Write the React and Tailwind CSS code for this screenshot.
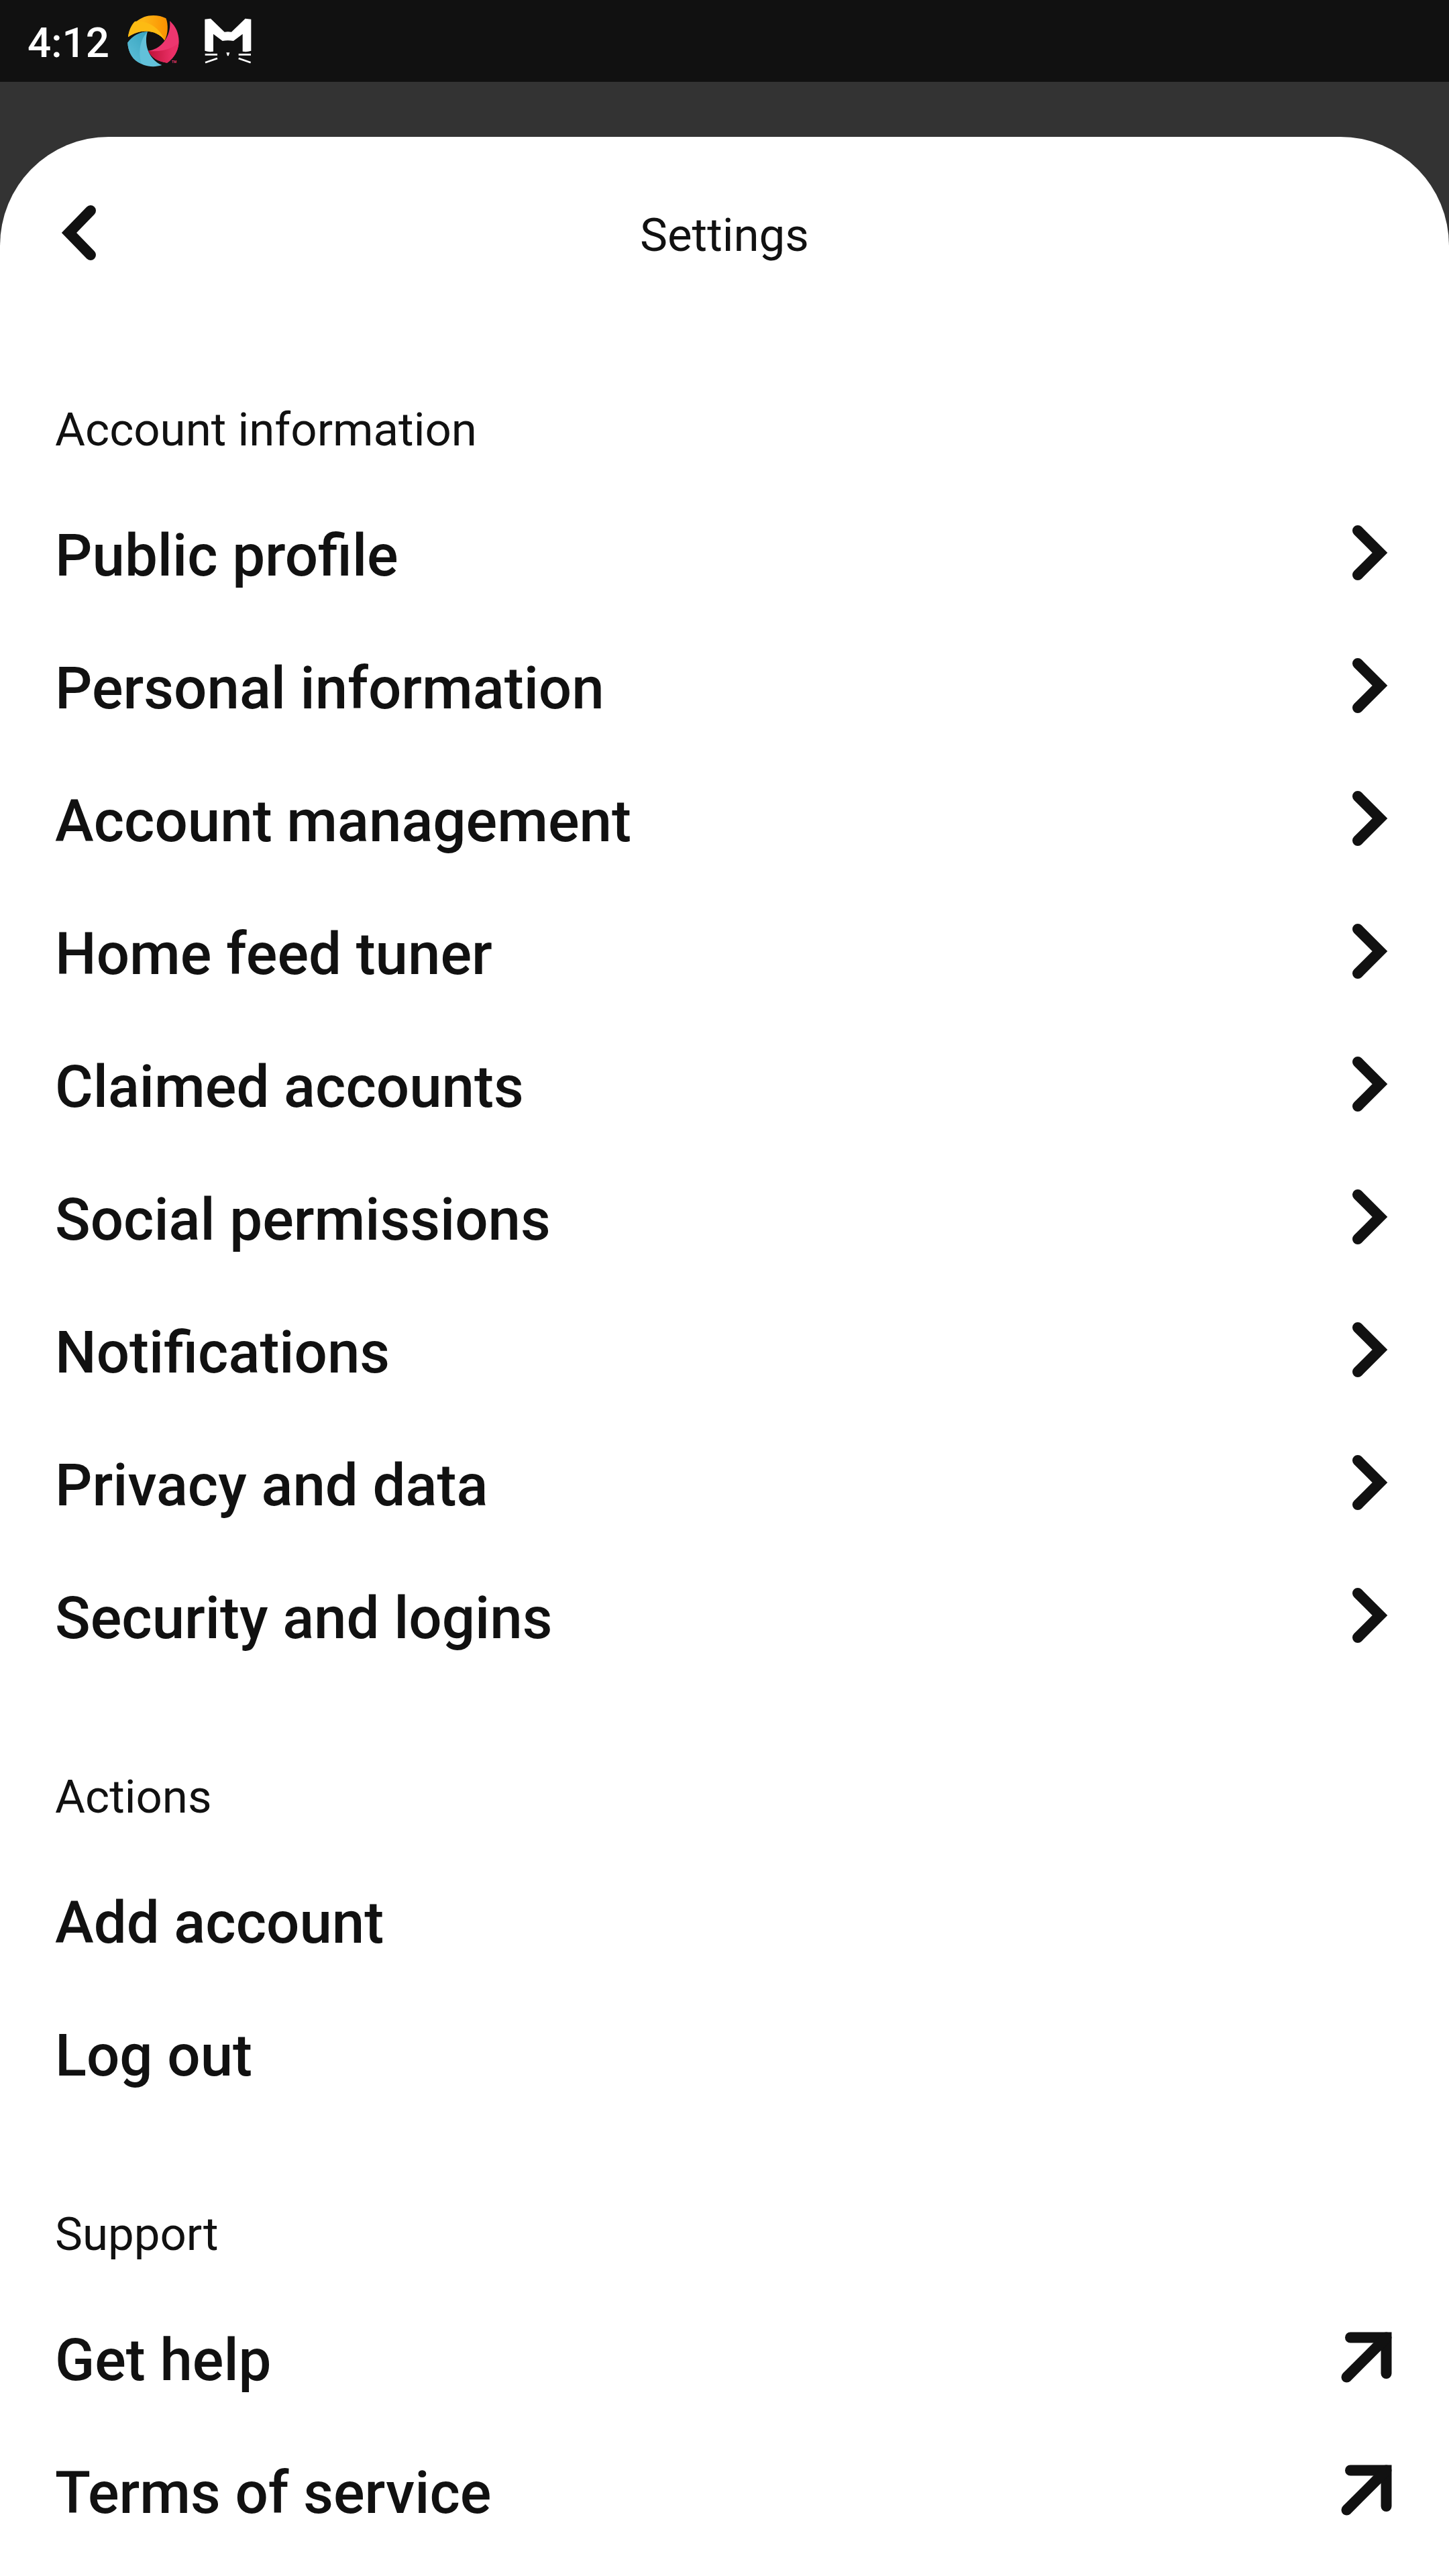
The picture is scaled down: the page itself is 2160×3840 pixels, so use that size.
const sections = [
  {
    title: "Account information",
    icon: "chevron",
    items: [
      "Public profile",
      "Personal information",
      "Account management",
      "Home feed tuner",
      "Claimed accounts",
      "Social permissions",
      "Notifications",
      "Privacy and data",
      "Security and logins",
    ],
  },
  { title: "Actions", icon: null, items: ["Add account", "Log out"] },
  { title: "Support", icon: "arrow", items: ["Get help", "Terms of service"] },
];

const iconPaths = {
  back: ["M53 10 L21 43 L53 76"],
  chevron: ["M32 10 L65 43 L32 76"],
  arrow: ["M21 13.5 H74.5 V67", "M15.5 72.5 L74.5 13.5"],
};

function Icon({ name }) {
  return (
    <svg
      className="size-[86px] shrink-0"
      viewBox="0 0 86 86"
      fill="none"
      stroke="currentColor"
      strokeWidth="16"
      strokeLinecap="round"
      strokeLinejoin="miter"
      aria-hidden="true"
    >
      {iconPaths[name].map((d) => (
        <path key={d} d={d} />
      ))}
    </svg>
  );
}

function SwirlLogo() {
  return (
    <svg className="size-[77px]" viewBox="567 68 232 232" role="img" aria-label="App notification">
      <defs>
        <linearGradient id="orange" x1="0" x2="1">
          <stop offset="0.4" stopColor="#fdb515" />
          <stop offset="1" stopColor="#fb9000" />
        </linearGradient>
        <linearGradient id="red" x1="0" x2="1">
          <stop offset="0" stopColor="#bd1237" />
          <stop offset="0.8" stopColor="#ea2f66" />
        </linearGradient>
        <linearGradient id="blue" x1="1" y1="0" x2="0.3" y2="1">
          <stop offset="0" stopColor="#36a3bf" />
          <stop offset="1" stopColor="#5bbdd6" />
        </linearGradient>
      </defs>
      <path d="M570 165C576 108 626 68 683 68Q715 68 740 81C751 108 750 152 734 181C705 133 625 123 570 165Z" fill="url(#orange)" />
      <path d="M570 165C573 137 583 112 600 95C658 90 712 122 734 181C705 133 625 123 570 165Z" fill="#fdbb13" />
      <path d="M568 190C590 160 622 142 657 141C640 195 660 265 722 291C650 315 570 270 568 190Z" fill="#62c1da" />
      <path d="M568 190C590 160 622 142 657 141C622 178 615 235 630 286C590 270 570 235 568 190Z" fill="url(#blue)" />
      <path d="M757 93C783 115 798 148 798 184C798 222 776 260 745 281C703 276 677 258 660 227C715 222 765 165 757 93Z" fill="#ee366f" />
      <path d="M660 227C710 234 765 220 796 192C796 226 776 260 745 281C703 276 677 258 660 227Z" fill="url(#red)" />
      <text x="766" y="282" fill="#ee366f" fontSize="14" fontFamily="Roboto" fontWeight="700">TM</text>
    </svg>
  );
}

function CatLogo() {
  return (
    <svg className="h-[68px] w-[70px]" viewBox="916 84 210 204" fill="#fff" role="img" aria-label="App notification">
      <path d="M917 89L943 86L1005 146Q1020 143 1036 146L1098 86L1124 89V230Q1104 237 1086 233V155L1045 186Q1020 181 996 186L955 155V233Q936 237 917 230Z" />
      <path d="M1013 238H1028L1023 253H1018Z" />
      <path d="M918 247H973M1068 247H1123M919 283L973 264M1068 264L1122 283" stroke="#fff" strokeWidth="8" />
    </svg>
  );
}

function Row({ label, icon }) {
  const row = "flex h-[198px] w-full items-center justify-between text-left text-[87px] leading-none font-medium";
  const content = (
    <>
      <span className="pt-2">{label}</span>
      {icon && <Icon name={icon} />}
    </>
  );
  return (
    <li>
      {icon === "arrow" ? (
        <a href="#" className={row}>{content}</a>
      ) : (
        <button type="button" className={row}>{content}</button>
      )}
    </li>
  );
}

export default function App() {
  return (
    <div className="flex min-h-screen flex-col bg-[#333333] font-['Roboto',sans-serif] text-[#111111]">
      <div className="flex h-[122px] items-center bg-[#111111] px-[41px] text-white">
        <time className="pt-[6px] pr-[27px] text-[62px] leading-none font-medium">4:12</time>
        <SwirlLogo />
        <div className="pl-[38px]">
          <CatLogo />
        </div>
      </div>
      <main className="mt-[82px] grow rounded-t-[162px] bg-white px-[82px]">
        <header className="grid h-[265px] grid-cols-[1fr_auto_1fr] items-center pt-5">
          <button type="button" aria-label="Back" className="justify-self-start">
            <Icon name="back" />
          </button>
          <h1 className="pt-2 text-[69px] leading-[80px]">Settings</h1>
        </header>
        {sections.map(({ title, icon, items }) => (
          <section key={title} className="pt-[132px]">
            <h2 className="pb-11 text-[69px] leading-[80px]">{title}</h2>
            <ul>
              {items.map((label) => (
                <Row key={label} label={label} icon={icon} />
              ))}
            </ul>
          </section>
        ))}
      </main>
    </div>
  );
}
